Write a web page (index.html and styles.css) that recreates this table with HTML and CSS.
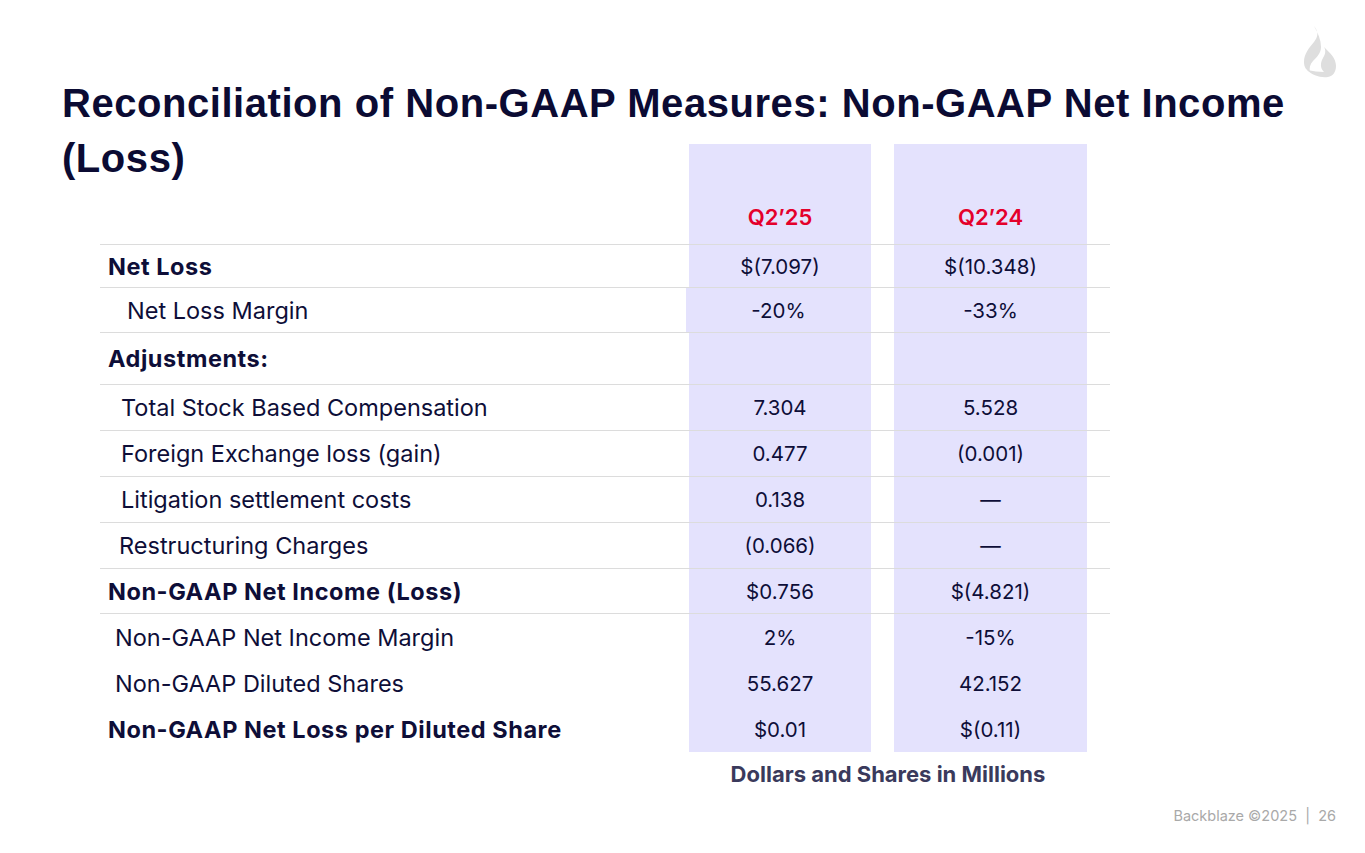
FILE: index.html
```html
<!DOCTYPE html>
<html lang="en">
<head>
<meta charset="utf-8">
<title>Reconciliation of Non-GAAP Measures</title>
<link rel="stylesheet" href="styles.css">
</head>
<body>
<div class="slide">
  <svg class="logo" viewBox="0 0 36 54" width="36" height="54" aria-hidden="true">
    <path fill="#dedede" d="M13 2 C18 8 17 13 13 18 C8 24 3 30 3 38 C3 43 5 46 9 48 C8 44 9 40 12 37 C16 33 20 29 20 23 C20 16 17 9 13 2 Z"/>
    <path fill="#dedede" d="M23 23 C26 28 23 32 21 36 C19 41 20 45 23 48 C18 48 12 47 6 46 C11 51 19 54 27 53 C32 52 35 48 35 42 C35 34 29 29 23 23 Z"/>
  </svg>
  <h1 class="title">Reconciliation of Non-GAAP Measures: Non-GAAP Net Income (Loss)</h1>
  <div class="table">
    <div class="row head">
      <div class="label"></div>
      <div class="val q">Q2’25</div>
      <div class="gap"></div>
      <div class="val q">Q2’24</div>
      <div class="gap"></div>
    </div>
    <div class="row r43 line">
      <div class="label b">Net Loss</div>
      <div class="val">$(7.097)</div><div class="gap"></div>
      <div class="val">$(10.348)</div><div class="gap"></div>
    </div>
    <div class="row r45 line">
      <div class="label i19">Net Loss Margin</div>
      <div class="val shift">-20%</div><div class="gap"></div>
      <div class="val">-33%</div><div class="gap"></div>
    </div>
    <div class="row r52 line">
      <div class="label b">Adjustments:</div>
      <div class="val"></div><div class="gap"></div>
      <div class="val"></div><div class="gap"></div>
    </div>
    <div class="row r46 line">
      <div class="label i13">Total Stock Based Compensation</div>
      <div class="val">7.304</div><div class="gap"></div>
      <div class="val">5.528</div><div class="gap"></div>
    </div>
    <div class="row r46 line">
      <div class="label i13">Foreign Exchange loss (gain)</div>
      <div class="val">0.477</div><div class="gap"></div>
      <div class="val">(0.001)</div><div class="gap"></div>
    </div>
    <div class="row r46 line">
      <div class="label i13">Litigation settlement costs</div>
      <div class="val">0.138</div><div class="gap"></div>
      <div class="val">—</div><div class="gap"></div>
    </div>
    <div class="row r46 line">
      <div class="label i11">Restructuring Charges</div>
      <div class="val">(0.066)</div><div class="gap"></div>
      <div class="val">—</div><div class="gap"></div>
    </div>
    <div class="row r45 line">
      <div class="label b">Non-GAAP Net Income (Loss)</div>
      <div class="val">$0.756</div><div class="gap"></div>
      <div class="val">$(4.821)</div><div class="gap"></div>
    </div>
    <div class="row r46">
      <div class="label i7">Non-GAAP Net Income Margin</div>
      <div class="val">2%</div><div class="gap"></div>
      <div class="val">-15%</div><div class="gap"></div>
    </div>
    <div class="row r46">
      <div class="label i7">Non-GAAP Diluted Shares</div>
      <div class="val">55.627</div><div class="gap"></div>
      <div class="val">42.152</div><div class="gap"></div>
    </div>
    <div class="row r46">
      <div class="label b">Non-GAAP Net Loss per Diluted Share</div>
      <div class="val">$0.01</div><div class="gap"></div>
      <div class="val">$(0.11)</div><div class="gap"></div>
    </div>
    <div class="note">Dollars and Shares in Millions</div>
  </div>
  <div class="footer">Backblaze ©2025 &nbsp;|&nbsp; 26</div>
</div>
</body>
</html>
```
FILE: styles.css
```css
html, body {
  margin: 0;
  padding: 0;
  background: #ffffff;
}
.slide {
  position: relative;
  width: 1365px;
  height: 853px;
  overflow: hidden;
  font-family: Inter, "DejaVu Sans", sans-serif;
  color: #0e0e38;
  padding: 76px 0 0 62px;
  box-sizing: border-box;
}
.logo {
  position: absolute;
  left: 1301px;
  top: 24px;
}
.title {
  margin: 0;
  width: 1270px;
  font-family: "Liberation Sans", Arial, sans-serif;
  font-weight: 700;
  font-size: 40px;
  line-height: 55px;
  color: #0b0b33;
  letter-spacing: 0.55px;
}
.table {
  margin: -42px 0 0 38px;
  width: 1010px;
  font-size: 24px;
}
.row {
  display: grid;
  grid-template-columns: 589px 182px 23px 193px 23px;
  box-sizing: border-box;
}
.row.line {
  border-bottom: 1px solid #dcdcdc;
}
.row.head {
  height: 101px;
  border-bottom: 1px solid #dcdcdc;
}
.r43 { height: 43px; }
.r45 { height: 45px; }
.r46 { height: 46px; }
.r52 { height: 52px; }
.label {
  display: flex;
  align-items: center;
  padding-left: 8px;
  white-space: nowrap;
  font-size: 23.5px;
}
.label.b {
  font-weight: 700;
  font-size: 23.5px;
  letter-spacing: 0.55px;
}
.label.i19 { padding-left: 27px; }
.label.i13 { padding-left: 21px; }
.label.i11 { padding-left: 19px; }
.label.i7 { padding-left: 15px; }
.val {
  display: flex;
  align-items: center;
  justify-content: center;
  background: #e4e2fd;
  white-space: nowrap;
  font-size: 20.5px;
}
.val.shift {
  margin-left: -3px;
}
.head .val {
  align-items: flex-end;
  padding-bottom: 14px;
}
.val.q {
  color: #e4002b;
  font-weight: 600;
  font-size: 22px;
}
.note {
  margin: 9px 0 0 589px;
  width: 398px;
  text-align: center;
  font-size: 22px;
  font-weight: 700;
  color: #3a3a5c;
}
.footer {
  position: absolute;
  right: 29px;
  bottom: 29px;
  font-size: 14.5px;
  color: #a9a9a9;
}
```
